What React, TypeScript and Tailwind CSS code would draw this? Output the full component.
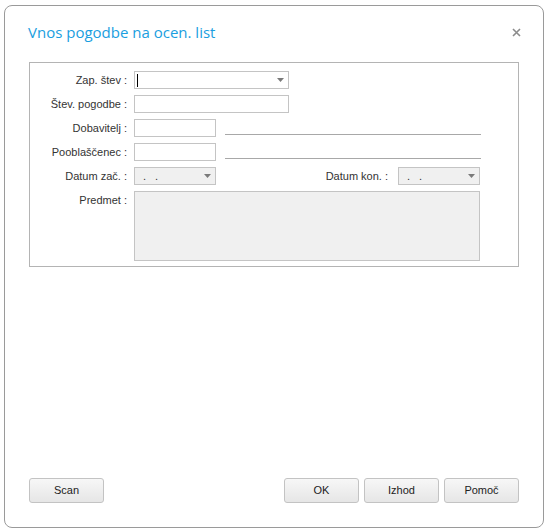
import React from "react";

const Arrow = () => (
  <svg width="7" height="4" viewBox="0 0 7 4" className="block">
    <path d="M0 0 H7 L3.5 4 Z" fill="#7a7a7a" />
  </svg>
);

const Label = ({ children }: { children: React.ReactNode }) => (
  <div className="w-[98px] shrink-0 text-right pr-[1px] leading-[18px] whitespace-nowrap">{children}</div>
);

const Row = ({ children }: { children: React.ReactNode }) => (
  <div className="flex items-start gap-[6px] h-[18px]">{children}</div>
);

const Btn = ({ children }: { children: React.ReactNode }) => (
  <button className="w-[75px] h-[25px] rounded-[3px] border border-[#c3c3c3] bg-gradient-to-b from-[#f7f7f7] to-[#e6e6e6] text-[11px] text-[#222]">
    {children}
  </button>
);

export default function App() {
  return (
    <div className="w-[548px] h-[531px] bg-white pt-[5px] pl-[4px]" style={{ fontFamily: '"Liberation Sans", Arial, sans-serif' }}>
      <div className="w-[540px] h-[523px] border border-[#9a9a9a] rounded-[8px] flex flex-col">
        <div className="flex items-center justify-between h-[50px] pl-[23px] pr-[22px] pt-[2px]">
          <div className="text-[15px] text-[#1a9ee0]" style={{ fontFamily: '"Open Sans", sans-serif' }}>Vnos pogodbe na ocen. list</div>
          <svg width="9" height="9" viewBox="0 0 9 9">
            <path d="M1 1 L8 8 M8 1 L1 8" stroke="#8c8c8c" strokeWidth="1.6" />
          </svg>
        </div>
        <div className="ml-[24px] mt-[6px] w-[490px] h-[205px] border border-[#b4b4b4] pt-[8px] flex flex-col gap-[6px] text-[11px] text-[#333]">
          <Row>
            <Label>Zap. štev :</Label>
            <div className="w-[155px] h-[18px] border border-[#c4c4c4] bg-white flex items-center justify-between pl-[2px] pr-[4px]">
              <div className="w-[1px] h-[13px] bg-black" />
              <Arrow />
            </div>
          </Row>
          <Row>
            <Label>Štev. pogodbe :</Label>
            <div className="w-[155px] h-[18px] border border-[#c4c4c4] bg-white" />
          </Row>
          <Row>
            <Label>Dobavitelj :</Label>
            <div className="w-[82px] h-[18px] border border-[#c4c4c4] bg-white" />
            <div className="ml-[3px] mt-[15px] w-[256px] h-[1px] bg-[#a8a8a8]" />
          </Row>
          <Row>
            <Label>Pooblaščenec :</Label>
            <div className="w-[82px] h-[18px] border border-[#c4c4c4] bg-white" />
            <div className="ml-[3px] mt-[15px] w-[256px] h-[1px] bg-[#a8a8a8]" />
          </Row>
          <Row>
            <Label>Datum zač. :</Label>
            <div className="w-[82px] h-[18px] border border-[#c4c4c4] bg-[#f0f0f0] flex items-center justify-between pl-[8px] pr-[4px]">
              <span className="leading-[14px] tracking-[3px]">. .</span>
              <Arrow />
            </div>
            <div className="w-[170px] shrink-0 text-right pr-[4px] leading-[18px]">Datum kon. :</div>
            <div className="w-[82px] h-[18px] border border-[#c4c4c4] bg-[#f0f0f0] flex items-center justify-between pl-[8px] pr-[4px]">
              <span className="leading-[14px] tracking-[3px]">. .</span>
              <Arrow />
            </div>
          </Row>
          <div className="flex items-start gap-[6px]">
            <Label>Predmet :</Label>
            <div className="w-[346px] h-[70px] border border-[#c4c4c4] bg-[#f0f0f0]" />
          </div>
        </div>
        <div className="mt-auto mb-[24px] px-[24px] flex items-center">
          <Btn>Scan</Btn>
          <div className="ml-auto flex gap-[5px]">
            <Btn>OK</Btn>
            <Btn>Izhod</Btn>
            <Btn>Pomoč</Btn>
          </div>
        </div>
      </div>
    </div>
  );
}
